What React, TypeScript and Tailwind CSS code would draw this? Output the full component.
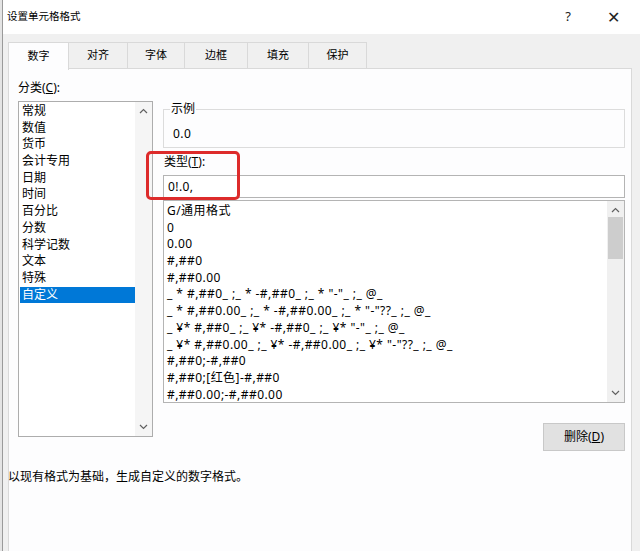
import React from "react";

const categories = ["常规", "数值", "货币", "会计专用", "日期", "时间", "百分比", "分数", "科学记数", "文本", "特殊", "自定义"];
const formats = [
  "G/通用格式",
  "0",
  "0.00",
  "#,##0",
  "#,##0.00",
  '_ * #,##0_ ;_ * -#,##0_ ;_ * "-"_ ;_ @_',
  '_ * #,##0.00_ ;_ * -#,##0.00_ ;_ * "-"??_ ;_ @_',
  '_ ¥* #,##0_ ;_ ¥* -#,##0_ ;_ ¥* "-"_ ;_ @_',
  '_ ¥* #,##0.00_ ;_ ¥* -#,##0.00_ ;_ ¥* "-"??_ ;_ @_',
  "#,##0;-#,##0",
  "#,##0;[红色]-#,##0",
  "#,##0.00;-#,##0.00",
];
const tabs = [
  { t: "数字", w: 61 },
  { t: "对齐", w: 59 },
  { t: "字体", w: 57 },
  { t: "边框", w: 63 },
  { t: "填充", w: 61 },
  { t: "保护", w: 58 },
];

function Up() {
  return (
    <svg width="9" height="6" viewBox="0 0 9 6">
      <path d="M1 5 L4.5 1.5 L8 5" fill="none" stroke="#606060" strokeWidth="1.2" />
    </svg>
  );
}
function Down() {
  return (
    <svg width="9" height="6" viewBox="0 0 9 6">
      <path d="M1 1 L4.5 4.5 L8 1" fill="none" stroke="#606060" strokeWidth="1.2" />
    </svg>
  );
}

export default function App() {
  return (
    <div
      className="w-[640px] h-[551px] flex bg-[#f0f0f0] overflow-hidden text-black"
      style={{ fontFamily: '"Noto Sans", "Noto Sans CJK SC", sans-serif' }}
    >
      <div className="w-[2px] bg-[#e4e4e4]" />
      <div className="w-[1px] bg-[#9a9a9a]" />
      <div className="flex-1 flex flex-col">
        {/* title bar */}
        <div className="h-[34px] bg-white flex items-center justify-between pl-[4px] pr-[20px] shrink-0">
          <span className="text-[10.5px]">设置单元格格式</span>
          <div className="flex items-center gap-[36px] text-[13px] text-[#222]">
            <span>?</span>
            <span className="text-[16px] font-light">✕</span>
          </div>
        </div>
        {/* tabs */}
        <div className="flex pl-[5px] mt-[8px] h-[26px] shrink-0">
          {tabs.map((tab, i) => (
            <div
              key={tab.t}
              className={
                i === 0
                  ? "bg-[#fdfdfe] border border-[#d9d9d9] border-b-0 h-[28px] relative z-10 flex items-center justify-center text-[11px]"
                  : "bg-[#f0f0f0] border border-[#d9d9d9] border-l-0 border-b-0 h-[26px] flex items-center justify-center text-[11px]"
              }
              style={{ width: tab.w }}
            >
              {tab.t}
            </div>
          ))}
        </div>
        {/* panel */}
        <div className="relative ml-[5px] w-[624px] flex-1 bg-[#fdfdfe] border border-[#d9d9d9] border-b-0 pl-[9px] pt-[10px] text-[12px]">
          <div className="leading-[18px]">
            分类(<span className="underline">C</span>):
          </div>
          <div className="flex gap-[10px] mt-[4px]">
            {/* category list */}
            <div className="w-[135px] h-[336px] border border-[#adadad] bg-white flex">
              <div className="flex-1 pt-[1px] pl-[1px]">
                {categories.map((c, i) => (
                  <div
                    key={c}
                    className={
                      i === categories.length - 1
                        ? "h-[16.7px] leading-[16.7px] pl-[2px] bg-[#0078d7] text-white"
                        : "h-[16.7px] leading-[16.7px] pl-[2px]"
                    }
                  >
                    {c}
                  </div>
                ))}
              </div>
              <div className="w-[17px] bg-[#f5f5f5] flex flex-col justify-between items-center py-[6px]">
                <Up />
                <Down />
              </div>
            </div>
            {/* right column */}
            <div className="w-[462px] flex flex-col mt-[1px]">
              <fieldset className="border border-[#dcdcdc] h-[46px] px-[6px]">
                <legend className="px-[1px] leading-[14px]">示例</legend>
                <div className="pl-[3px] mt-[10px] leading-[16px] tracking-[0.4px]">0.0</div>
              </fieldset>
              <div className="mt-[6px] leading-[16px] pl-[1px]">
                类型(<span className="underline">T</span>):
              </div>
              <div className="mt-[5px] h-[23px] border border-[#b4b4b4] bg-white flex items-center pl-[4px] tracking-[0.4px]">0!.0,</div>
              <div className="mt-[2px] h-[203px] border border-[#b4b4b4] bg-white flex">
                <div className="flex-1 pt-[2px] pl-[3px] overflow-hidden">
                  {formats.map((f) => (
                    <div key={f} className="h-[16.7px] leading-[16.7px] whitespace-pre tracking-[0.45px]">
                      {f}
                    </div>
                  ))}
                </div>
                <div className="w-[17px] bg-[#f0f0f0] flex flex-col items-center pt-[6px] pb-[6px]">
                  <Up />
                  <div className="w-[15px] h-[42px] bg-[#cdcdcd] mt-[4px]" />
                  <div className="flex-1" />
                  <Down />
                </div>
              </div>
              <div className="flex justify-end mt-[20px]">
                <button className="w-[82px] h-[28px] bg-[#e1e1e1] border border-[#c8c8c8] text-[12px]">
                  删除(<span className="underline">D</span>)
                </button>
              </div>
            </div>
          </div>
          <div className="mt-[17px] -ml-[10px] leading-[18px]">以现有格式为基础，生成自定义的数字格式。</div>
          {/* red highlight */}
          <div className="absolute left-[137px] top-[82px] w-[94px] h-[49px] border-[3px] border-[#dd2b2b] rounded-[5px]" />
        </div>
      </div>
    </div>
  );
}
